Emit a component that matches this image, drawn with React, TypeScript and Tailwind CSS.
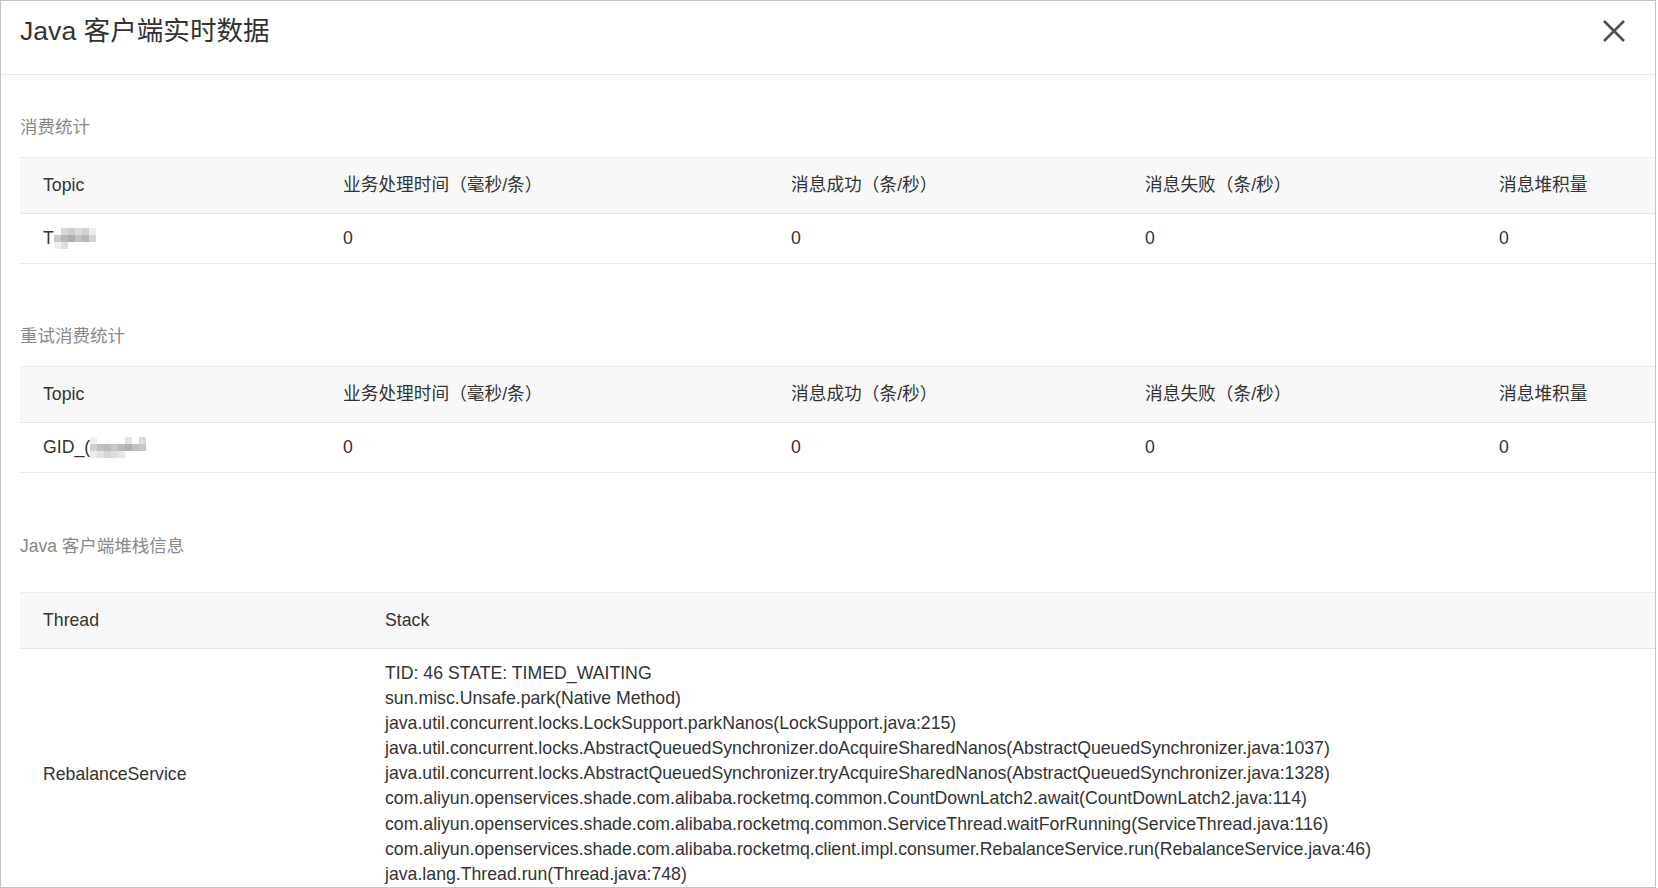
import { Fragment } from 'react';

const FONT = "font-['Liberation_Sans','Noto_Sans_CJK_SC',sans-serif]";

const STAT_COLUMNS = ['Topic', '业务处理时间（毫秒/条）', '消息成功（条/秒）', '消息失败（条/秒）', '消息堆积量'];
const COL_WIDTHS = ['w-[300px]', 'w-[448px]', 'w-[354px]', 'w-[354px]', 'w-[320px]'];

const STACK_LINES = [
  'TID: 46 STATE: TIMED_WAITING',
  'sun.misc.Unsafe.park(Native Method)',
  'java.util.concurrent.locks.LockSupport.parkNanos(LockSupport.java:215)',
  'java.util.concurrent.locks.AbstractQueuedSynchronizer.doAcquireSharedNanos(AbstractQueuedSynchronizer.java:1037)',
  'java.util.concurrent.locks.AbstractQueuedSynchronizer.tryAcquireSharedNanos(AbstractQueuedSynchronizer.java:1328)',
  'com.aliyun.openservices.shade.com.alibaba.rocketmq.common.CountDownLatch2.await(CountDownLatch2.java:114)',
  'com.aliyun.openservices.shade.com.alibaba.rocketmq.common.ServiceThread.waitForRunning(ServiceThread.java:116)',
  'com.aliyun.openservices.shade.com.alibaba.rocketmq.client.impl.consumer.RebalanceService.run(RebalanceService.java:46)',
  'java.lang.Thread.run(Thread.java:748)',
];

// pixelated mask over hidden names
function Mosaic({ cells }: { cells: string[][] }) {
  return (
    <span className="inline-flex flex-col align-middle">
      {cells.map((row, r) => (
        <span key={r} className="flex">
          {row.map((c, i) => (
            <span key={i} className="block w-[7px] h-[7px]" style={{ backgroundColor: c }} />
          ))}
        </span>
      ))}
    </span>
  );
}

function SectionLabel({ children, className }: { children: React.ReactNode; className: string }) {
  return <div className={`text-[17.5px] leading-[25px] text-[#888] ${className}`}>{children}</div>;
}

function StatTable({ name }: { name: React.ReactNode }) {
  return (
    <div className="w-[1700px]">
      <div className="flex h-[57px] items-center border-y border-t-[#ececec] border-b-[#e3e7ec] bg-[#f8f8f8]">
        {STAT_COLUMNS.map((col, i) => (
          <div key={col} className={`${COL_WIDTHS[i]} shrink-0 pl-[23px]`}>
            {col}
          </div>
        ))}
      </div>
      <div className="flex h-[50px] items-center border-b border-[#e8e8e8]">
        <div className={`${COL_WIDTHS[0]} shrink-0 pl-[23px] flex items-center`}>{name}</div>
        {[1, 2, 3, 4].map((i) => (
          <div key={i} className={`${COL_WIDTHS[i]} shrink-0 pl-[23px]`}>
            0
          </div>
        ))}
      </div>
    </div>
  );
}

export default function App() {
  return (
    <div
      className={`w-[1656px] h-[888px] overflow-hidden border border-[#c6c6c6] bg-white text-[#333] text-[17.7px] ${FONT}`}
    >
      {/* header */}
      <div className="flex h-[74px] items-start justify-between border-b border-[#e8e8e8] pl-[19px] pr-[30px]">
        <h1 className="mt-[13px] text-[26.6px] leading-[34px] font-normal text-[#333]">Java 客户端实时数据</h1>
        <button className="mt-[19px] text-[#505050]" aria-label="close">
          <svg width="22" height="22" viewBox="0 0 22 22" fill="none" stroke="currentColor" strokeWidth="2.6">
            <path d="M1 1 L21 21 M21 1 L1 21" />
          </svg>
        </button>
      </div>

      <div className="pl-[19px]">
        <SectionLabel className="mt-[40px] mb-[17px]">消费统计</SectionLabel>
        <StatTable
          name={
            <Fragment>
              <span>T</span>
              <Mosaic
                cells={[
                  ['#ffffff', '#d8d8d8', '#cdcdcd', '#dcdcdc', '#d2d2d2', '#ededed'],
                  ['#c9c9c9', '#b9b9b9', '#afafaf', '#c3c3c3', '#b8b8b8', '#d4d4d4'],
                  ['#eeeeee', '#dedede', '#ffffff', '#ffffff', '#ffffff', '#ffffff'],
                ]}
              />
            </Fragment>
          }
        />

        <SectionLabel className="mt-[60px] mb-[17px]">重试消费统计</SectionLabel>
        <StatTable
          name={
            <Fragment>
              <span>GID_(</span>
              <Mosaic
                cells={[
                  ['#f0f0f0', '#ffffff', '#ffffff', '#ffffff', '#ffffff', '#e4e4e4', '#ffffff', '#dcdcdc'],
                  ['#d2d2d2', '#c2c2c2', '#bcbcbc', '#c8c8c8', '#b8b8b8', '#b0b0b0', '#c0c0c0', '#c8c8c8'],
                  ['#ebebeb', '#e2e2e2', '#d6d6d6', '#dedede', '#e8e8e8', '#ffffff', '#ffffff', '#ffffff'],
                ]}
              />
            </Fragment>
          }
        />

        <SectionLabel className="mt-[61px] mb-[33px]">Java 客户端堆栈信息</SectionLabel>
        <div className="w-[1700px]">
          <div className="flex h-[57px] items-center border-y border-t-[#ececec] border-b-[#e3e7ec] bg-[#f8f8f8]">
            <div className="w-[342px] shrink-0 pl-[23px]">Thread</div>
            <div className="flex-1 pl-[23px]">Stack</div>
          </div>
          <div className="flex items-center border-b border-[#e8e8e8]">
            <div className="w-[342px] shrink-0 pl-[23px]">RebalanceService</div>
            <div className="flex-1 py-[12px] pl-[23px] leading-[25.1px]">
              {STACK_LINES.map((line) => (
                <div key={line} className="whitespace-nowrap">
                  {line}
                </div>
              ))}
            </div>
          </div>
        </div>
      </div>
    </div>
  );
}
